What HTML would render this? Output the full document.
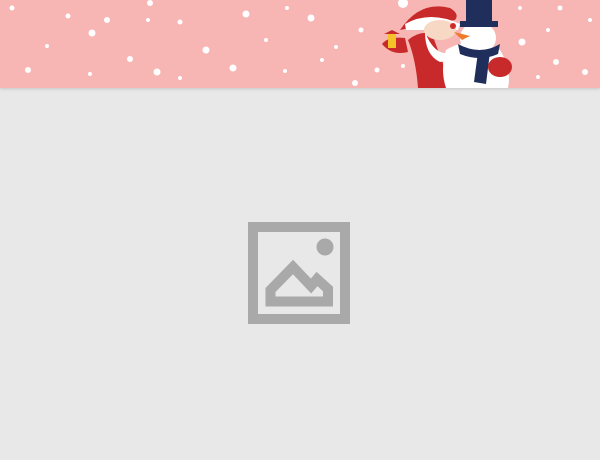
<!DOCTYPE html>
<html><head><style>
html,body{margin:0;padding:0;width:600px;height:460px;background:#e8e8e8;overflow:hidden}
.hd{position:absolute;left:0;top:0;width:600px;height:88px;background:#f7b6b4;box-shadow:0 1px 3px rgba(0,0,0,.15);overflow:hidden}
</style></head><body>
<div class="hd">
<svg width="600" height="88" viewBox="0 0 600 88">
<g fill="#fff">
<circle cx="12" cy="8" r="2.5"/><circle cx="68" cy="16" r="2.5"/><circle cx="92" cy="33" r="3.5"/><circle cx="107" cy="20" r="3"/><circle cx="150" cy="3" r="3"/><circle cx="148" cy="20" r="2"/><circle cx="180" cy="22" r="2.5"/><circle cx="206" cy="50" r="3.5"/><circle cx="246" cy="14" r="3.5"/><circle cx="233" cy="68" r="3.5"/><circle cx="287" cy="8" r="2"/><circle cx="311" cy="18" r="3.5"/><circle cx="322" cy="60" r="2"/><circle cx="28" cy="70" r="3"/><circle cx="47" cy="46" r="2"/><circle cx="90" cy="74" r="2"/><circle cx="130" cy="59" r="3"/><circle cx="157" cy="72" r="3.5"/><circle cx="180" cy="78" r="2"/><circle cx="266" cy="40" r="2"/><circle cx="285" cy="71" r="2"/><circle cx="355" cy="83" r="3"/><circle cx="361" cy="30" r="2.5"/><circle cx="336" cy="47" r="2"/><circle cx="522" cy="42" r="3.5"/><circle cx="548" cy="30" r="2"/><circle cx="560" cy="8" r="2.5"/><circle cx="556" cy="62" r="3"/><circle cx="585" cy="72" r="3"/><circle cx="590" cy="20" r="2"/><circle cx="538" cy="77" r="2"/><circle cx="377" cy="70" r="2.5"/><circle cx="403" cy="66" r="2"/><circle cx="520" cy="8" r="2"/>
</g>
<!-- santa -->
<path d="M408 40 Q420 30 432 34 L452 88 L418 88 Q416 60 408 40Z" fill="#c82a2b"/>
<path d="M400 30 Q420 0 450 8 Q460 14 455 20 L410 28Z" fill="#c82a2b"/>
<circle cx="403" cy="3" r="5" fill="#fff"/>
<path d="M405 24 Q430 10 460 24 L458 30 L406 30Z" fill="#fff"/>
<ellipse cx="440" cy="30" rx="16" ry="10" fill="#f6d8c4"/>
<path d="M425 32 Q440 70 470 40 Q460 60 440 62 Q425 55 425 32Z" fill="#fff"/>
<circle cx="453" cy="26" r="3" fill="#d12a2a"/>
<path d="M405 38 Q388 36 382 44 Q392 56 408 52Z" fill="#c82a2b"/>
<rect x="388" y="34" width="8" height="14" fill="#f5c22a"/>
<path d="M384 34 L392 30 L400 34Z" fill="#c82a2b"/>
<!-- snowman -->
<path d="M446 50 Q470 35 500 50 Q512 70 508 88 L446 88 Q440 70 446 50Z" fill="#fff"/>
<ellipse cx="478" cy="38" rx="18" ry="16" fill="#fff"/>
<rect x="466" y="0" width="26" height="24" fill="#1f2e5a"/>
<rect x="460" y="21" width="38" height="6" fill="#1f2e5a"/>
<path d="M462 40 L454 32 L470 36Z" fill="#f07a2a"/>
<path d="M458 44 Q480 56 500 44 L498 54 Q480 62 460 54Z" fill="#1f2e5a"/>
<path d="M478 52 L490 52 L486 84 L474 82Z" fill="#1f2e5a"/>
<ellipse cx="500" cy="67" rx="12" ry="10" fill="#c82a2b"/>
</svg>
</div>
<svg style="position:absolute;left:0;top:0" width="600" height="460">
<rect x="253" y="227" width="92" height="92" fill="none" stroke="#a9a9a9" stroke-width="10"/>
<circle cx="325" cy="247" r="8.5" fill="#a9a9a9"/>
<path d="M270.5 301.5 L270.5 290 L293 267 L311 286 L317 279 L328 289 L328 301.5Z" fill="none" stroke="#a9a9a9" stroke-width="10" stroke-linejoin="miter"/>
</svg>
</body></html>
